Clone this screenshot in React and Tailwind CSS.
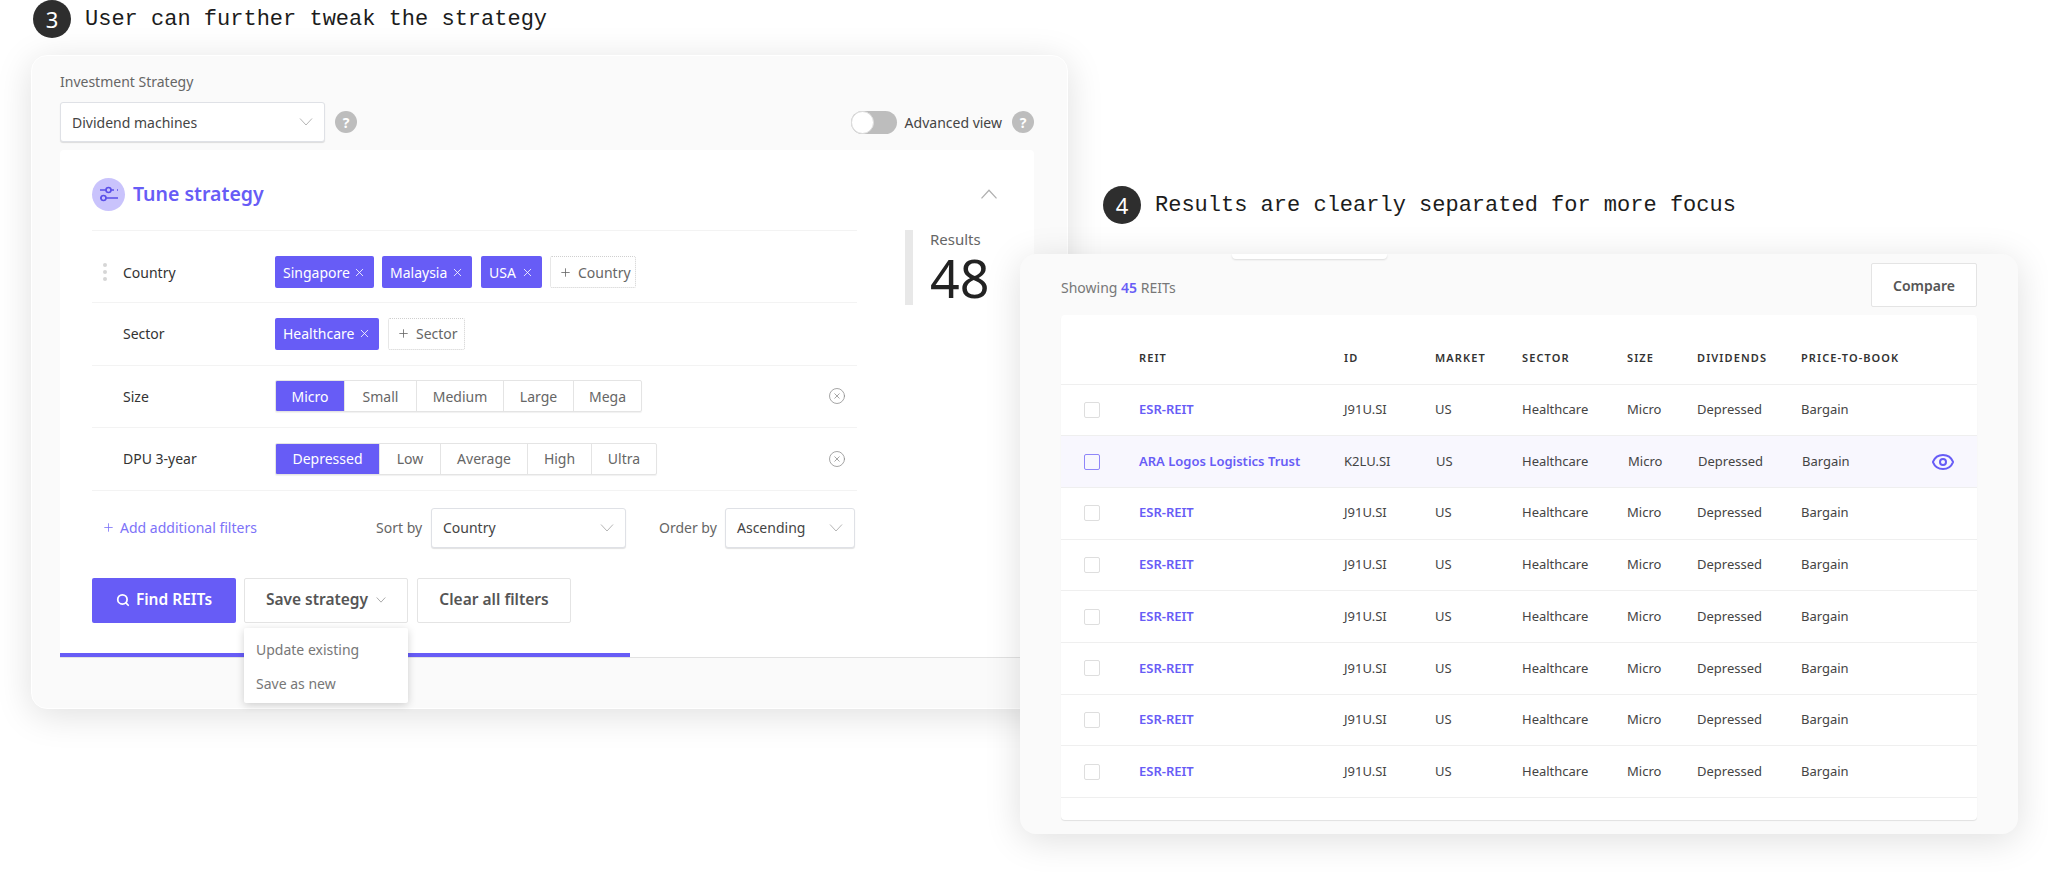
import React from "react";
import { CircleX, Eye, Plus, Search, X } from "lucide-react";

const font = "font-['Noto_Sans',sans-serif]";

const Chevron = ({ up, className = "" }) => (
  <svg viewBox="0 0 14 8" fill="none" stroke="currentColor" strokeWidth="1" className={className}>
    <path d={up ? "M1 7.5l6-6.5 6 6.5" : "M1 .5l6 6.5 6-6.5"} />
  </svg>
);

const Help = () => (
  <span className="flex h-[22px] w-[22px] items-center justify-center rounded-full bg-[#bdbdbd] text-[14px] font-bold text-white">?</span>
);

const Step = ({ num, children }) => (
  <div className="flex items-center gap-[14px]">
    <span className={`flex h-[38px] w-[38px] items-center justify-center rounded-full bg-[#2e2e2e] text-[22px] text-white ${font}`}>{num}</span>
    <span className="font-['Liberation_Mono',monospace] text-[22px] text-[#1c1c1c]">{children}</span>
  </div>
);

const Select = ({ value, className = "" }) => (
  <div className={`flex h-10 items-center justify-between rounded-[3px] border border-[#dfe1e6] bg-white pl-[11px] pr-[11px] text-[14px] text-[#444] shadow-[0_1px_1px_rgba(0,0,0,0.12)] ${className}`}>
    <span>{value}</span>
    <Chevron className="h-[8px] w-[14px] text-[#b5b5b5]" />
  </div>
);

const Chip = ({ children, className = "" }) => (
  <span className={`flex h-8 items-center justify-between rounded-[2px] bg-[#675cf6] pl-2 pr-2 text-[14px] text-white ${className}`}>
    {children}
    <X size={13} strokeWidth={1.5} />
  </span>
);

const AddChip = ({ children, className = "" }) => (
  <span className={`flex h-8 items-center gap-[6px] rounded-[2px] border border-dotted border-[#cfcfcf] pl-2 text-[14px] text-[#666] ${className}`}>
    <Plus size={13} strokeWidth={1.5} />
    {children}
  </span>
);

const Segments = ({ items }) => (
  <div className="flex h-8 overflow-hidden rounded-[2px] border border-[#e4e4e4] text-[14px] text-[#666] shadow-[0_1px_1px_rgba(0,0,0,0.06)]">
    {items.map(([label, w], i) => (
      <span
        key={label}
        style={{ width: w }}
        className={`flex items-center justify-center ${i === 0 ? "bg-[#675cf6] text-white" : "border-l border-[#e4e4e4]"}`}
      >
        {label}
      </span>
    ))}
  </div>
);

const Label = ({ children, dots }) => (
  <div className="relative w-[183px] shrink-0 pl-[31px] text-[14px] text-[#333]">
    {dots && (
      <span className="absolute left-[11px] top-1/2 flex -translate-y-1/2 flex-col gap-[3px]">
        <i className="h-1 w-1 rounded-full bg-[#d6d6d6]" />
        <i className="h-1 w-1 rounded-full bg-[#d6d6d6]" />
        <i className="h-1 w-1 rounded-full bg-[#d6d6d6]" />
      </span>
    )}
    {children}
  </div>
);

const Strategy = () => (
  <section className="w-[1068px] shrink-0 pl-[31px]">
    <div className="ml-[2px]">
      <Step num="3">User can further tweak the strategy</Step>
    </div>
    <div className="mt-[17px] h-[654px] rounded-[16px] border border-white bg-[#fafafa] pl-[28px] pr-[33px] pt-[16px] shadow-[0_6px_36px_rgba(0,0,0,0.13)]">
      <div className="text-[14px] leading-5 text-[#666]">Investment Strategy</div>
      <div className="mt-[10px] flex h-10 items-center">
        <Select value="Dividend machines" className="w-[265px]" />
        <span className="ml-[10px]"><Help /></span>
        <span className="ml-auto h-[23px] w-[46px] rounded-full bg-[#bdbdbd] p-0">
          <span className="block h-[23px] w-[23px] rounded-full border border-[#ddd] bg-white" />
        </span>
        <span className="ml-2 text-[14px] text-[#444]">Advanced view</span>
        <span className="ml-[10px]"><Help /></span>
      </div>

      <div className="mt-2 rounded-t-[4px] bg-white pl-[32px] pt-[27px]">
        <div className="flex h-[34px] w-[906px] items-center justify-between">
          <div className="flex items-center gap-2">
            <span className="flex h-[33px] w-[33px] items-center justify-center rounded-full bg-[#c9c3fc]">
              <svg viewBox="0 0 24 24" className="h-[24px] w-[24px]" fill="none" stroke="#5a4fe8" strokeWidth="1.6">
                <path d="M3 8h6M14 8h3M20 8h1M9 16h12M3 16h1" />
                <circle cx="11.5" cy="8" r="2.5" />
                <circle cx="6.5" cy="16" r="2.5" />
              </svg>
            </span>
            <h2 className="text-[19.5px] font-semibold text-[#675cf6]">Tune strategy</h2>
          </div>
          <Chevron up className="h-[10px] w-[18px] text-[#b0b0b0]" />
        </div>

        <div className="mt-[19px] flex">
          <div className="w-[765px]">
            <div className="flex h-[73px] items-start border-y border-[#f3f3f3] pt-[25px]">
              <div className="flex h-8 items-center"><Label dots>Country</Label></div>
              <div className="flex gap-2">
                <Chip className="w-[99px]">Singapore</Chip>
                <Chip className="w-[90px]">Malaysia</Chip>
                <Chip className="ml-[1px] w-[61px]">USA</Chip>
                <AddChip className="w-[86px]">Country</AddChip>
              </div>
            </div>
            <div className="flex h-[62.5px] items-center border-b border-[#f3f3f3]">
              <Label>Sector</Label>
              <div className="flex gap-[9px]">
                <Chip className="w-[104px]">Healthcare</Chip>
                <AddChip className="w-[77px]">Sector</AddChip>
              </div>
            </div>
            <div className="flex h-[62.5px] items-center border-b border-[#f3f3f3]">
              <Label>Size</Label>
              <Segments items={[["Micro", 68], ["Small", 72], ["Medium", 87], ["Large", 70], ["Mega", 68]]} />
              <CircleX size={18} strokeWidth={1} className="ml-auto mr-[11px] text-[#888]" />
            </div>
            <div className="flex h-[62.5px] items-center border-b border-[#f3f3f3]">
              <Label>DPU 3-year</Label>
              <Segments items={[["Depressed", 103], ["Low", 61], ["Average", 87], ["High", 64], ["Ultra", 65]]} />
              <CircleX size={18} strokeWidth={1} className="ml-auto mr-[11px] text-[#888]" />
            </div>
            <div className="mt-[17px] flex h-10 items-center text-[14px] text-[#666]">
              <div className="flex w-[284px] items-center gap-[5px] pl-[10px] text-[#7d72f8]">
                <Plus size={13} strokeWidth={1.5} />
                Add additional filters
              </div>
              <span className="w-[55px]">Sort by</span>
              <Select value="Country" className="w-[195px]" />
              <span className="ml-[33px] w-[66px]">Order by</span>
              <Select value="Ascending" className="w-[130px]" />
            </div>
            <div className="mt-[30px] flex h-[45px] gap-2 text-[15.5px] font-semibold">
              <button className="flex w-[144px] items-center justify-center gap-[6px] rounded-[2px] bg-[#675cf6] text-white">
                <Search size={14} strokeWidth={3} />
                Find REITs
              </button>
              <div className="relative z-10">
                <button className="flex h-[45px] w-[164px] items-center justify-center gap-2 rounded-[2px] border border-[#e4e4e4] bg-white text-[#555]">
                  Save strategy
                  <Chevron className="h-[6px] w-[10px] text-[#888]" />
                </button>
                <div className="absolute left-0 top-[50px] h-[75px] w-[164px] rounded-[2px] bg-white pl-3 pt-[5px] text-[14px] font-normal leading-[34px] text-[#777] shadow-[0_2px_8px_rgba(0,0,0,0.18)]">
                  <div>Update existing</div>
                  <div>Save as new</div>
                </div>
              </div>
              <button className="ml-[1px] w-[154px] rounded-[2px] border border-[#e4e4e4] bg-white text-[#555]">Clear all filters</button>
            </div>
          </div>
          <div className="ml-[48px] flex h-[75px] border-l-8 border-[#e8e8e8] pl-[17px]">
            <div>
              <div className="text-[15px] leading-[18px] text-[#666]">Results</div>
              <div className="text-[52px] leading-[60px] text-[#222]">48</div>
            </div>
          </div>
        </div>
      </div>
      <div className="border-b border-[#e2e2e2] bg-white pt-[30px]">
        <div className="h-1 w-[570px] bg-[#675cf6]" />
      </div>
    </div>
  </section>
);

const columns = "grid-cols-[78px_205px_91px_87px_105px_70px_104px_1fr]";
const rows = Array.from({ length: 8 }, (_, i) =>
  i === 1 ? { name: "ARA Logos Logistics Trust", id: "K2LU.SI" } : { name: "ESR-REIT", id: "J91U.SI" }
);

const Results = () => (
  <section className="-ml-[48px] w-[998px] shrink-0 pt-[186px]">
    <div className="ml-[83px]">
      <Step num="4">Results are clearly separated for more focus</Step>
    </div>
    <div className="relative z-20 mt-[30px] h-[580px] rounded-[16px] bg-[#fafafa] pl-[41px] pr-[41px] pt-[9px] shadow-[0_6px_36px_rgba(0,0,0,0.13)]">
      <span className="absolute left-[212px] top-0 h-[5px] w-[155px] rounded-b-[4px] bg-white shadow-[0_1px_2px_rgba(0,0,0,0.12)]" />
      <div className="flex h-11 items-center justify-between">
        <span className="pt-1 text-[14px] text-[#777]">
          Showing <b className="font-semibold text-[#675cf6]">45</b> REITs
        </span>
        <button className="h-11 w-[106px] rounded-[2px] border border-[#e4e4e4] bg-white text-[14px] font-semibold text-[#555]">Compare</button>
      </div>
      <div className="mt-[8px] h-[505px] rounded-[4px] bg-white shadow-[0_1px_1px_rgba(0,0,0,0.1)]">
        <div className={`grid h-[69.5px] ${columns} items-end border-b border-[#efefef] pb-[18px] text-[11px] font-semibold leading-4 tracking-[1.1px] text-[#333]`}>
          <span />
          <span>REIT</span>
          <span>ID</span>
          <span>MARKET</span>
          <span>SECTOR</span>
          <span>SIZE</span>
          <span>DIVIDENDS</span>
          <span>PRICE-TO-BOOK</span>
        </div>
        {rows.map((row, i) => (
          <div
            key={i}
            className={`grid h-[51.7px] items-center border-b border-[#efefef] text-[13px] text-[#444] ${
              i === 1 ? "grid-cols-[78px_205px_92px_86px_106px_70px_104px_1fr] bg-[#f8f7fe]" : columns
            }`}
          >
            <span className={`ml-[23px] h-4 w-4 rounded-[2px] border ${i === 1 ? "border-[#8f86f9]" : "border-[#dedede]"}`} />
            <span className="font-semibold text-[#675cf6]">{row.name}</span>
            <span>{row.id}</span>
            <span>US</span>
            <span>Healthcare</span>
            <span>Micro</span>
            <span>Depressed</span>
            <span className="flex items-center justify-between pr-[22px]">
              Bargain
              {i === 1 && <Eye size={24} strokeWidth={2} className="text-[#675cf6]" />}
            </span>
          </div>
        ))}
      </div>
    </div>
  </section>
);

export default function App() {
  return (
    <div className={`flex h-[872px] w-[2048px] overflow-hidden bg-white ${font}`}>
      <Strategy />
      <Results />
    </div>
  );
}
